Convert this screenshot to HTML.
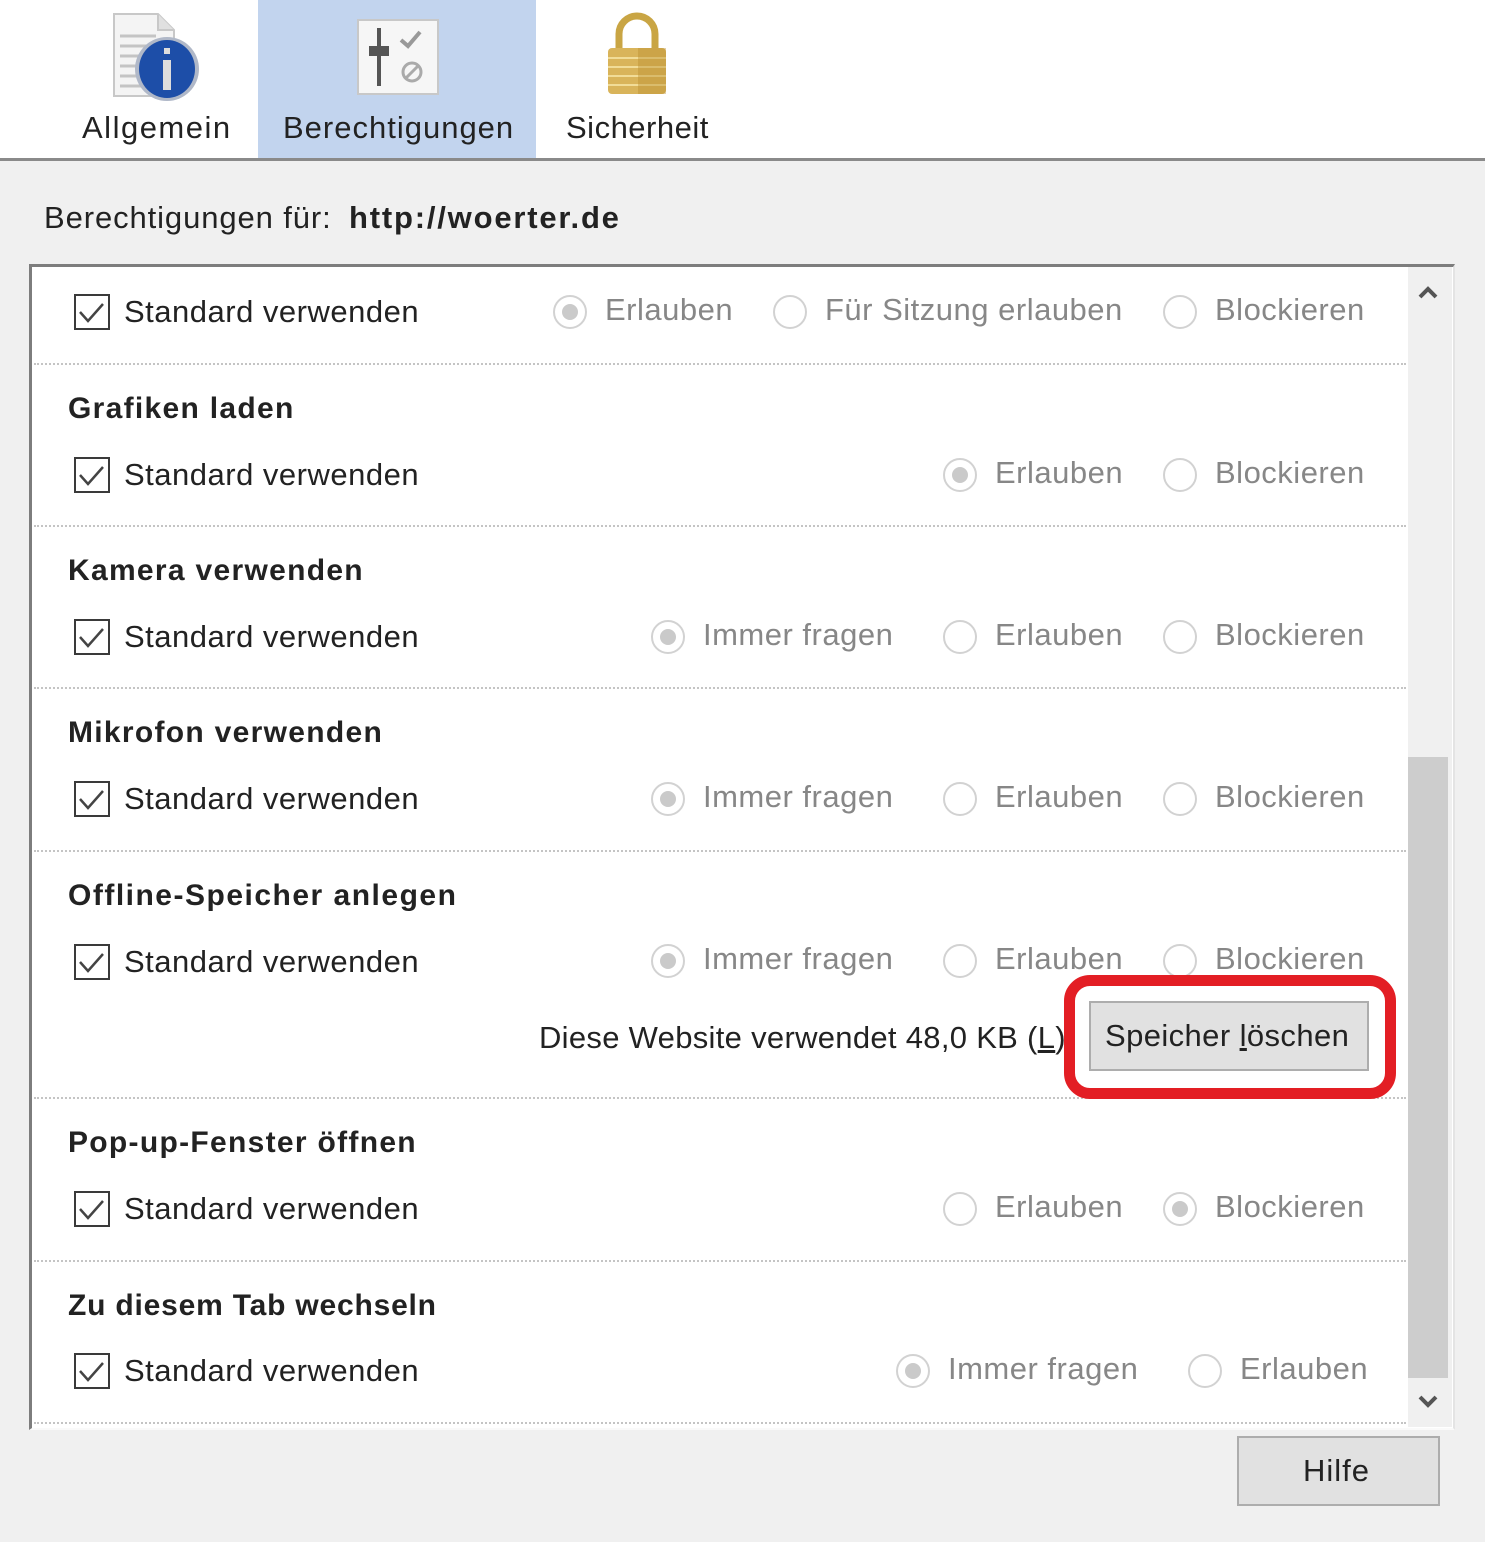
<!DOCTYPE html>
<html><head><meta charset="utf-8"><style>
*{margin:0;padding:0;box-sizing:border-box}
body{width:1485px;height:1542px;background:#f0f0f0;position:relative;overflow:hidden;font-family:"Liberation Sans",sans-serif;color:#222}
.a{position:absolute;white-space:nowrap;line-height:40px}
.t{font-size:31px;letter-spacing:0.5px}
.h{font-size:30px;font-weight:bold;letter-spacing:1.3px;color:#222}
.g{color:#878787}
.cb{position:absolute;left:74px;width:36px;height:36px;border:2px solid #3a3a3a;background:#fff}
.r{position:absolute;width:34px;height:34px;border:2px solid #d2d2d2;border-radius:50%;background:#fff}
.r.s::after{content:"";position:absolute;left:7px;top:7px;width:16px;height:16px;border-radius:50%;background:#cacaca}
.sep{position:absolute;left:34px;width:1372px;border-top:2px dotted #c4c4c4}
</style></head><body>
<div style="position:absolute;left:0;top:0;width:1485px;height:158px;background:#fff"></div>
<div style="position:absolute;left:258px;top:0;width:278px;height:158px;background:#c2d4ee"></div>
<div style="position:absolute;left:0;top:158px;width:1485px;height:3px;background:#8a8a8a"></div>
<svg style="position:absolute;left:108px;top:10px" width="96" height="92" viewBox="0 0 96 92">
<path d="M6 4h44l16 16v66H6z" fill="#f4f4f4" stroke="#c8c8c8" stroke-width="2"/>
<path d="M50 4v16h16" fill="#e0e0e0" stroke="#c8c8c8" stroke-width="2"/>
<g stroke="#c4c4c4" stroke-width="3"><line x1="12" y1="26" x2="48" y2="26"/><line x1="12" y1="36" x2="44" y2="36"/><line x1="12" y1="46" x2="40" y2="46"/><line x1="12" y1="56" x2="40" y2="56"/><line x1="12" y1="66" x2="40" y2="66"/><line x1="12" y1="76" x2="40" y2="76"/></g>
<ellipse cx="59" cy="59" rx="32" ry="32" fill="#b0b8c8"/>
<ellipse cx="59" cy="59" rx="28" ry="29" fill="#1d4ea8"/>
<rect x="55" y="50" width="8" height="30" fill="#ddd"/><rect x="56" y="38" width="6" height="6" fill="#ddd"/>
</svg>
<svg style="position:absolute;left:356px;top:18px" width="84" height="80" viewBox="0 0 84 80">
<rect x="2" y="2" width="80" height="74" fill="#f6f6f6" stroke="#c8c8c8" stroke-width="2"/>
<rect x="21" y="10" width="4" height="58" fill="#555"/><rect x="13" y="28" width="20" height="10" fill="#555"/>
<path d="M45 22l7 6 12-14" fill="none" stroke="#999" stroke-width="4"/>
<circle cx="56" cy="54" r="9" fill="none" stroke="#aaa" stroke-width="3"/><line x1="50" y1="60" x2="62" y2="48" stroke="#aaa" stroke-width="3"/>
</svg>
<svg style="position:absolute;left:600px;top:12px" width="74" height="86" viewBox="0 0 74 86">
<path d="M19 40V22a18 18 0 0 1 36 0v18" fill="none" stroke="#c9a544" stroke-width="7"/>
<rect x="8" y="36" width="58" height="46" rx="4" fill="#d9b45a"/>
<g stroke="#f1dc97" stroke-width="2"><line x1="8" y1="46" x2="66" y2="46"/><line x1="8" y1="55" x2="66" y2="55"/><line x1="8" y1="64" x2="66" y2="64"/><line x1="8" y1="73" x2="66" y2="73"/></g>
<rect x="38" y="36" width="28" height="46" fill="#b88d2e" opacity=".4"/>
</svg>
<div class="a t" style="left:82px;top:108px;letter-spacing:1.5px">Allgemein</div>
<div class="a t" style="left:283px;top:108px;letter-spacing:1px">Berechtigungen</div>
<div class="a t" style="left:566px;top:108px;letter-spacing:0.5px">Sicherheit</div>
<div class="a t" style="left:44px;top:198px;letter-spacing:0.9px">Berechtigungen für:</div>
<div class="a t" style="left:349px;top:198px;letter-spacing:1.8px;font-weight:bold">http://woerter.de</div>
<div style="position:absolute;left:29px;top:264px;width:1426px;height:1166px;background:#fff;border-top:3px solid #7d7d7d;border-left:3px solid #7d7d7d;border-right:2px solid #e4e4e4;border-bottom:2px solid #fafafa"></div>
<div style="position:absolute;left:1408px;top:267px;width:44px;height:1160px;background:#f0f0f0"></div>
<div style="position:absolute;left:1408px;top:757px;width:40px;height:621px;background:#cdcdcd"></div>
<svg style="position:absolute;left:1418px;top:284px" width="20" height="16"><path d="M2 13L10 5l8 8" fill="none" stroke="#555" stroke-width="4"/></svg>
<svg style="position:absolute;left:1418px;top:1394px" width="20" height="16"><path d="M2 3l8 8 8-8" fill="none" stroke="#555" stroke-width="4"/></svg>
<div class="sep" style="top:363px"></div><div class="sep" style="top:525px"></div><div class="sep" style="top:687px"></div><div class="sep" style="top:850px"></div><div class="sep" style="top:1097px"></div><div class="sep" style="top:1260px"></div><div class="sep" style="top:1422px"></div>
<div class="a h" style="left:68px;top:389px">Grafiken laden</div>
<div class="a h" style="left:68px;top:551px">Kamera verwenden</div>
<div class="a h" style="left:68px;top:713px">Mikrofon verwenden</div>
<div class="a h" style="left:68px;top:876px;letter-spacing:1.5px">Offline-Speicher anlegen</div>
<div class="a h" style="left:68px;top:1123px">Pop-up-Fenster öffnen</div>
<div class="a h" style="left:68px;top:1286px;letter-spacing:0.8px">Zu diesem Tab wechseln</div>
<div class="cb" style="top:294px"></div><div class="cb" style="top:457px"></div><div class="cb" style="top:619px"></div><div class="cb" style="top:781px"></div><div class="cb" style="top:944px"></div><div class="cb" style="top:1191px"></div><div class="cb" style="top:1353px"></div>
<svg style="position:absolute;left:0;top:0" width="130" height="1542">
<g fill="none" stroke="#444" stroke-width="2.5">
<path d="M80 312l8 9 15-17"/><path d="M80 475l8 9 15-17"/><path d="M80 637l8 9 15-17"/><path d="M80 799l8 9 15-17"/><path d="M80 962l8 9 15-17"/><path d="M80 1209l8 9 15-17"/><path d="M80 1371l8 9 15-17"/>
</g></svg>
<div class="a t" style="left:124px;top:292px">Standard verwenden</div>
<div class="a t" style="left:124px;top:455px">Standard verwenden</div>
<div class="a t" style="left:124px;top:617px">Standard verwenden</div>
<div class="a t" style="left:124px;top:779px">Standard verwenden</div>
<div class="a t" style="left:124px;top:942px">Standard verwenden</div>
<div class="a t" style="left:124px;top:1189px">Standard verwenden</div>
<div class="a t" style="left:124px;top:1351px">Standard verwenden</div>
<div class="r s" style="left:553px;top:295px"></div><div class="a t g" style="left:605px;top:290px">Erlauben</div>
<div class="r" style="left:773px;top:295px"></div><div class="a t g" style="left:825px;top:290px">Für Sitzung erlauben</div>
<div class="r" style="left:1163px;top:295px"></div><div class="a t g" style="left:1215px;top:290px">Blockieren</div>
<div class="r s" style="left:943px;top:458px"></div><div class="a t g" style="left:995px;top:453px">Erlauben</div>
<div class="r" style="left:1163px;top:458px"></div><div class="a t g" style="left:1215px;top:453px">Blockieren</div>
<div class="r s" style="left:651px;top:620px"></div><div class="a t g" style="left:703px;top:615px">Immer fragen</div>
<div class="r" style="left:943px;top:620px"></div><div class="a t g" style="left:995px;top:615px">Erlauben</div>
<div class="r" style="left:1163px;top:620px"></div><div class="a t g" style="left:1215px;top:615px">Blockieren</div>
<div class="r s" style="left:651px;top:782px"></div><div class="a t g" style="left:703px;top:777px">Immer fragen</div>
<div class="r" style="left:943px;top:782px"></div><div class="a t g" style="left:995px;top:777px">Erlauben</div>
<div class="r" style="left:1163px;top:782px"></div><div class="a t g" style="left:1215px;top:777px">Blockieren</div>
<div class="r s" style="left:651px;top:944px"></div><div class="a t g" style="left:703px;top:939px">Immer fragen</div>
<div class="r" style="left:943px;top:944px"></div><div class="a t g" style="left:995px;top:939px">Erlauben</div>
<div class="r" style="left:1163px;top:944px"></div><div class="a t g" style="left:1215px;top:939px">Blockieren</div>
<div class="a t" style="left:539px;top:1018px;letter-spacing:0.3px">Diese Website verwendet 48,0 KB (<u>L</u>)</div>
<div style="position:absolute;left:1064px;top:975px;width:332px;height:124px;border:11px solid #e31e24;border-radius:26px;background:#fff"></div>
<div style="position:absolute;left:1089px;top:1001px;width:280px;height:70px;background:#e1e1e1;border:2px solid #adadad"></div>
<div class="a t" style="left:1105px;top:1016px;letter-spacing:0.4px">Speicher <u>l</u>öschen</div>
<div class="r" style="left:943px;top:1192px"></div><div class="a t g" style="left:995px;top:1187px">Erlauben</div>
<div class="r s" style="left:1163px;top:1192px"></div><div class="a t g" style="left:1215px;top:1187px">Blockieren</div>
<div class="r s" style="left:896px;top:1354px"></div><div class="a t g" style="left:948px;top:1349px">Immer fragen</div>
<div class="r" style="left:1188px;top:1354px"></div><div class="a t g" style="left:1240px;top:1349px">Erlauben</div>
<div style="position:absolute;left:1237px;top:1436px;width:203px;height:70px;background:#e1e1e1;border:2px solid #adadad"></div>
<div class="a t" style="left:1303px;top:1451px;letter-spacing:1px">Hilfe</div>
</body></html>
